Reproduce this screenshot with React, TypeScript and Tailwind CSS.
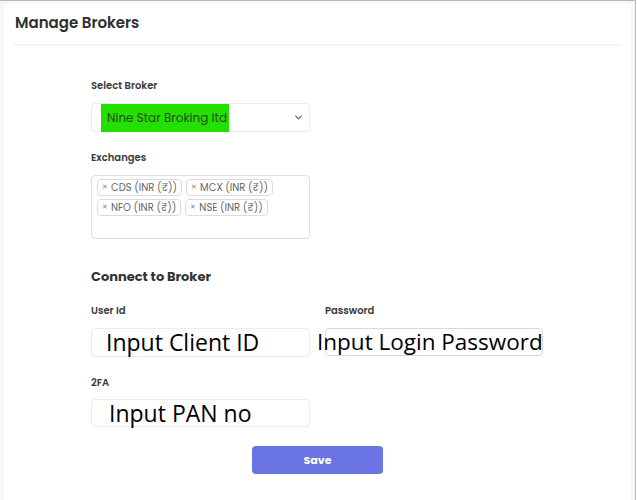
import { ChevronDown } from 'lucide-react'

const ui = { fontFamily: '"Poppins", "Inter", "Noto Sans", sans-serif' }
const big = { fontFamily: '"Open Sans", "Noto Sans", sans-serif' }

const EXCHANGES = [
  ['CDS (INR (₹))', 'MCX (INR (₹))'],
  ['NFO (INR (₹))', 'NSE (INR (₹))'],
]

const Label = ({ children }: { children: React.ReactNode }) => (
  <p className="h-4 text-[10px] font-semibold leading-4 text-[#3a3a3a]">{children}</p>
)

export default function App() {
  return (
    <div
      className="h-[500px] w-[636px] overflow-hidden border-t border-r border-[#b9b9b9] bg-[#f6f6f8] pt-[2px] pl-1 pr-[4px]"
      style={ui}
    >
      <div className="h-full rounded-tl-md bg-white px-[9px] pt-[10px]">
        {/* Header */}
        <h1 className="h-5 pl-[2px] text-[15px] font-semibold leading-5 text-[#2f2f33]">Manage Brokers</h1>
        <div className="mt-[11px] h-[2px] w-[609px] bg-[#f5f5f7]" />

        {/* Form */}
        <div className="ml-[78px] mt-[32px] w-[452px]">
          <Label>Select Broker</Label>
          <div className="mt-[9px] flex h-[29px] w-[219px] items-center rounded border border-[#ececec] pl-[9px] pr-[5px]">
            <span className="flex h-[28px] items-center bg-[#22e000] pl-[6px] pr-[2px] text-[12px] text-[#2a4a1c]">
              Nine Star Broking ltd
            </span>
            <ChevronDown className="ml-auto h-[11px] w-[11px] text-[#555]" strokeWidth={2.5} />
          </div>

          <div className="mt-[18px]">
            <Label>Exchanges</Label>
          </div>
          <div className="mt-[9px] flex h-[64px] w-[219px] flex-col gap-[3px] rounded border border-[#dedede] px-[5px] pt-[3px]">
            {EXCHANGES.map((row, i) => (
              <div key={i} className="flex gap-[4px]">
                {row.map((x) => (
                  <span
                    key={x}
                    className="flex h-[17px] items-center gap-[3px] rounded-sm border border-[#dcdcdc] px-[4px] text-[10px] text-[#666]"
                  >
                    <span className="text-[7px] text-[#888]">✕</span>
                    {x}
                  </span>
                ))}
              </div>
            ))}
          </div>

          <h2 className="mt-[28px] h-5 text-[13px] font-bold leading-5 text-[#333]">Connect to Broker</h2>

          <div className="mt-[16px] grid grid-cols-[219px_218px] gap-x-[15px]">
            <div>
              <Label>User Id</Label>
              <div className="mt-[9px] flex h-[29px] items-center overflow-visible rounded border border-[#ececec] pl-[14px]">
                <span className="whitespace-nowrap text-[23px] leading-none text-black" style={big}>
                  Input Client ID
                </span>
              </div>
            </div>
            <div>
              <Label>Password</Label>
              <div className="mt-[9px] flex h-[28px] items-center rounded-sm border border-[#d9d9d9]">
                <span className="-ml-[9px] whitespace-nowrap text-[22.5px] leading-none text-black" style={big}>
                  Input Login Password
                </span>
              </div>
            </div>
          </div>

          <div className="mt-[18px]">
            <Label>2FA</Label>
          </div>
          <div className="mt-[8px] flex h-[28px] w-[219px] items-center rounded border border-[#ececec] pl-[17px]">
            <span className="whitespace-nowrap text-[23px] leading-none text-black" style={big}>
              Input PAN no
            </span>
          </div>

          <div className="mt-[19px] flex justify-center">
            <button className="ml-[1px] h-[28px] w-[131px] rounded bg-[#6a74e2] text-[11px] font-bold text-white">
              Save
            </button>
          </div>
        </div>
      </div>
    </div>
  )
}
